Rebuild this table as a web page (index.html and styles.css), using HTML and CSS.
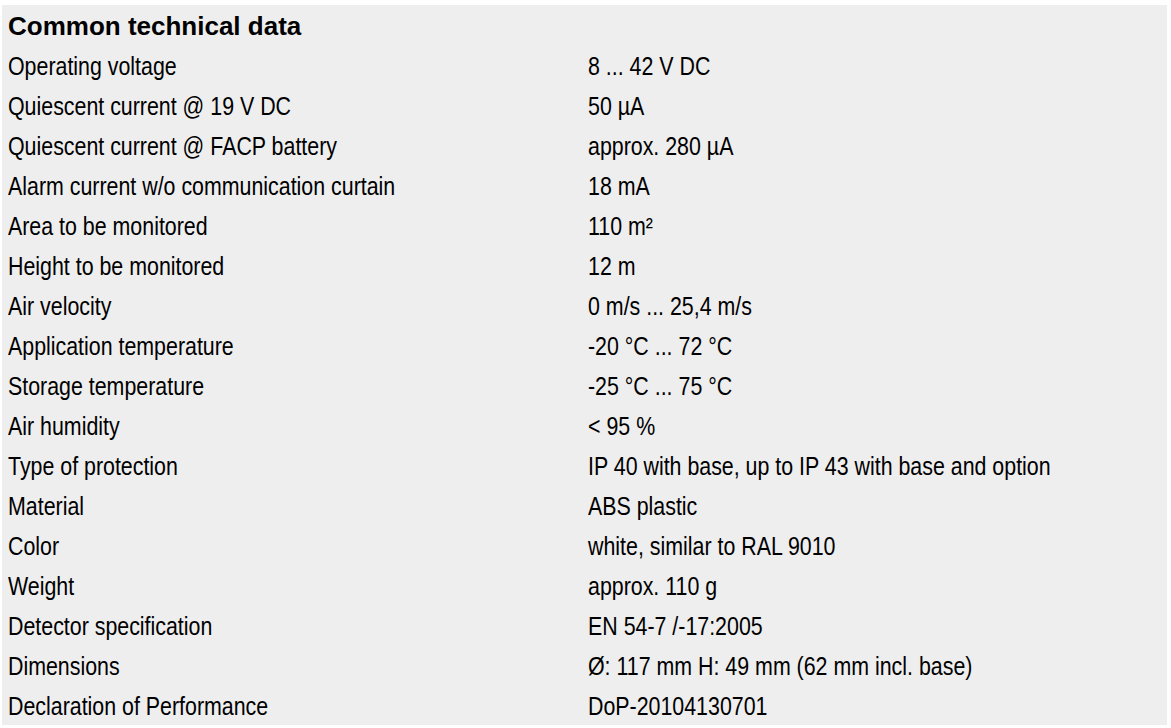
FILE: index.html
```html
<!DOCTYPE html>
<html lang="en">
<head>
<meta charset="utf-8">
<title>Common technical data</title>
<link rel="stylesheet" href="styles.css">
</head>
<body>
<div class="sheet">
  <div class="title">Common technical data</div>
  <div class="table">
    <div class="k">Operating voltage</div><div class="v">8 ... 42 V DC</div>
    <div class="k">Quiescent current @ 19 V DC</div><div class="v">50 µA</div>
    <div class="k">Quiescent current @ FACP battery</div><div class="v">approx. 280 µA</div>
    <div class="k">Alarm current w/o communication curtain</div><div class="v">18 mA</div>
    <div class="k">Area to be monitored</div><div class="v">110 m²</div>
    <div class="k">Height to be monitored</div><div class="v">12 m</div>
    <div class="k">Air velocity</div><div class="v">0 m/s ... 25,4 m/s</div>
    <div class="k">Application temperature</div><div class="v">-20 °C ... 72 °C</div>
    <div class="k">Storage temperature</div><div class="v">-25 °C ... 75 °C</div>
    <div class="k">Air humidity</div><div class="v">&lt; 95 %</div>
    <div class="k">Type of protection</div><div class="v">IP 40 with base, up to IP 43 with base and option</div>
    <div class="k">Material</div><div class="v">ABS plastic</div>
    <div class="k">Color</div><div class="v">white, similar to RAL 9010</div>
    <div class="k">Weight</div><div class="v">approx. 110 g</div>
    <div class="k">Detector specification</div><div class="v">EN 54-7 /-17:2005</div>
    <div class="k">Dimensions</div><div class="v">Ø: 117 mm H: 49 mm (62 mm incl. base)</div>
    <div class="k">Declaration of Performance</div><div class="v">DoP-20104130701</div>
  </div>
</div>
</body>
</html>
```
FILE: styles.css
```css
html, body {
  margin: 0;
  padding: 0;
  background: #ffffff;
}
.sheet {
  margin: 5px 4px 0 2px;
  width: 1165px;
  height: 720px;
  background: #eeeeee;
  padding: 1px 0 0 6px;
  box-sizing: border-box;
  color: #000000;
}
.title {
  font-family: "Liberation Sans", Arial, sans-serif;
  font-weight: bold;
  font-size: 26px;
  line-height: 40px;
  height: 40px;
}
.table {
  display: grid;
  grid-template-columns: 580px 1fr;
  grid-auto-rows: 40px;
  font-family: "Liberation Sans", Arial, sans-serif;
  font-size: 26px;
  line-height: 40px;
}
.k, .v {
  white-space: nowrap;
  transform: scaleX(0.822);
  transform-origin: left center;
}
```
